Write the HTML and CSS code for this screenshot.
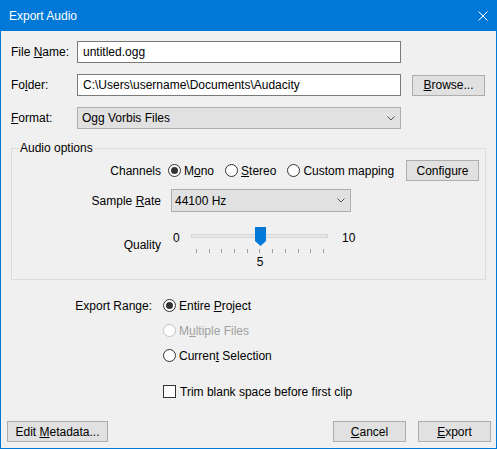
FILE: index.html
```html
<!DOCTYPE html>
<html>
<head>
<meta charset="utf-8">
<title>Export Audio</title>
<link rel="stylesheet" href="styles.css">
</head>
<body>
<div class="window">
  <div class="titlebar">
    <span class="title">Export Audio</span>
    <svg class="close" width="10" height="10" viewBox="0 0 10 10"><path d="M0.5 0.5L9.5 9.5M9.5 0.5L0.5 9.5" stroke="#fff" stroke-width="1" fill="none"/></svg>
  </div>

  <div class="file-grid">
    <span class="flabel">File <u>N</u>ame:</span>
    <div class="textbox">untitled.ogg</div>
    <span></span>
    <span class="flabel">Fo<u>l</u>der:</span>
    <div class="textbox">C:\Users\username\Documents\Audacity</div>
    <div class="button">
      <span><u>B</u>rowse...</span>
    </div>
    <span class="flabel"><u>F</u>ormat:</span>
    <div class="combo">
      <span>Ogg Vorbis Files</span>
      <svg class="chev" width="8" height="5" viewBox="0 0 8 5"><path d="M0.5 0.5L4 4L7.5 0.5" stroke="#555" stroke-width="1" fill="none"/></svg>
    </div>
  </div>

  <fieldset class="group">
    <legend>Audio options</legend>
    <div class="opt-grid">
      <span class="olabel">Channels</span>
      <div class="channels">
        <div class="radio checked"><span class="circle"></span><span>M<u>o</u>no</span></div>
        <div class="radio"><span class="circle"></span><span><u>S</u>tereo</span></div>
        <div class="radio"><span class="circle"></span><span>Custom mappin<u>g</u></span></div>
        <div class="button configure"><span>Configure</span></div>
      </div>

      <span class="olabel">Sample <u>R</u>ate</span>
      <div class="combo rate">
        <span>44100 Hz</span>
        <svg class="chev" width="8" height="5" viewBox="0 0 8 5"><path d="M0.5 0.5L4 4L7.5 0.5" stroke="#555" stroke-width="1" fill="none"/></svg>
      </div>

      <span class="olabel qlabel">Quality</span>
      <div class="quality">
        <span class="qmin">0</span>
        <div class="slider">
          <div class="track"></div>
          <svg class="thumb" width="11" height="19" viewBox="0 0 11 19"><path d="M0 0H11V14L5.5 19L0 14Z" fill="#0078d7"/></svg>
          <div class="ticks"><span></span><span></span><span></span><span></span><span></span><span></span><span></span><span></span><span></span><span></span><span></span></div>
          <div class="qval">5</div>
        </div>
        <span class="qmax">10</span>
      </div>
    </div>
  </fieldset>

  <div class="range">
    <span class="rlabel">Export Range:</span>
    <div class="radio checked r1"><span class="circle"></span><span>Entire <u>P</u>roject</span></div>
    <div class="radio disabled r2"><span class="circle"></span><span>M<u>u</u>ltiple Files</span></div>
    <div class="radio r3"><span class="circle"></span><span>Curren<u>t</u> Selection</span></div>
    <div class="check r4"><span class="box"></span><span>Trim blank space before first clip</span></div>
  </div>

  <div class="footer">
    <div class="button edit"><span>Edit <u>M</u>etadata...</span></div>
    <div class="button btn"><span><u>C</u>ancel</span></div>
    <div class="button btn"><span><u>E</u>xport</span></div>
  </div>
</div>
</body>
</html>
```

FILE: styles.css
```css
* { box-sizing: border-box; }
html, body { margin: 0; padding: 0; }
body {
  width: 497px;
  height: 449px;
  overflow: hidden;
  background: #f0f0f0;
  font-family: "Liberation Sans", Arial, sans-serif;
  font-size: 12px;
  color: #000;
}
.window {
  width: 497px;
  height: 449px;
  border: 1px solid #0078d7;
  border-top: 0;
  display: flex;
  flex-direction: column;
  background: #f0f0f0;
}
.titlebar {
  height: 31px;
  flex: none;
  background: #0078d7;
  color: #fff;
  display: flex;
  align-items: center;
  padding: 0 8px 0 8px;
}
.close { margin-left: auto; }

.file-grid {
  display: grid;
  grid-template-columns: 55px 324px 73px;
  grid-auto-rows: 22px;
  column-gap: 11px;
  row-gap: 11px;
  align-items: center;
  margin: 10px 0 0 10px;
}
.flabel { white-space: nowrap; }
.textbox {
  height: 22px;
  border: 1px solid #7a7a7a;
  background: #fff;
  padding: 0 5px;
  display: flex;
  align-items: center;
  white-space: nowrap;
}
.combo {
  height: 22px;
  border: 1px solid #adadad;
  background: #e1e1e1;
  padding: 0 5px 0 4px;
  display: flex;
  align-items: center;
  justify-content: space-between;
}
.button {
  height: 21px;
  border: 1px solid #adadad;
  background: #e1e1e1;
  display: flex;
  align-items: center;
  justify-content: center;
  white-space: nowrap;
}

.group {
  margin: 12px 10px 0 10px;
  padding: 5px 6px 10px 0;
  border: 1px solid #dcdcdc;
  min-width: 0;
}
.group legend {
  margin-left: 7px;
  padding: 0 1px;
  line-height: 14px;
}
.opt-grid {
  display: grid;
  grid-template-columns: 149px 1fr;
  column-gap: 6px;
  row-gap: 8px;
  align-items: center;
}
.olabel { text-align: right; white-space: nowrap; }
.channels {
  display: flex;
  align-items: center;
  height: 21px;
}
.channels .radio { margin-right: 11px; }
.channels .radio:first-child { margin-left: 1px; }
.configure { width: 73px; margin-left: auto; }
.rate { width: 180px; height: 23px; margin-left: 4px; padding-left: 3px; }

.radio, .check {
  display: flex;
  align-items: center;
  white-space: nowrap;
}
.circle {
  width: 13px;
  height: 13px;
  border: 1px solid #333;
  border-radius: 50%;
  background: #fff;
  margin-right: 3px;
  display: flex;
  align-items: center;
  justify-content: center;
  flex: none;
}
.radio.checked .circle::after {
  content: "";
  width: 7px;
  height: 7px;
  border-radius: 50%;
  background: #333;
}
.radio.disabled { color: #a0a0a0; }
.radio.disabled .circle { border-color: #c2c2c2; }
.box {
  width: 13px;
  height: 13px;
  border: 1px solid #333;
  background: #fff;
  margin-right: 4px;
  flex: none;
}

.qlabel { align-self: start; margin-top: 18px; line-height: 14px; }
.quality {
  align-self: start;
  margin-top: 7px;
  display: flex;
  align-items: flex-start;
}
.qmin { width: 7px; margin: 4px 0 0 6px; line-height: 14px; }
.qmax { margin: 4px 0 0 8px; line-height: 14px; }
.slider {
  position: relative;
  width: 149px;
  height: 42px;
  margin-left: 5px;
}
.track {
  width: 137px;
  height: 4px;
  margin: 7px 0 0 6px;
  border: 1px solid #d6d6d6;
  background: #e7e7e7;
}
.thumb { position: absolute; left: 70px; top: 0; }
.ticks {
  display: flex;
  justify-content: space-between;
  width: 128px;
  height: 4px;
  margin: 11px 0 0 11px;
}
.ticks span { width: 1px; height: 4px; background: #a0a0a0; }
.qval {
  width: 128px;
  margin: 2px 0 0 11px;
  text-align: center;
  line-height: 14px;
}

.range {
  display: grid;
  grid-template-columns: 151px auto;
  grid-template-rows: 25px 25px 25px 36px;
  column-gap: 11px;
  align-items: center;
  margin-top: 13px;
}
.rlabel { grid-column: 1; grid-row: 1; text-align: right; white-space: nowrap; }
.r1 { grid-column: 2; grid-row: 1; }
.r2 { grid-column: 2; grid-row: 2; }
.r3 { grid-column: 2; grid-row: 3; }
.r4 { grid-column: 2; grid-row: 4; align-self: end; height: 25px; }

.footer {
  margin-top: auto;
  display: flex;
  gap: 12px;
  padding: 0 5px 6px 6px;
}
.edit { width: 101px; margin-right: auto; }
.btn { width: 73px; }
```
